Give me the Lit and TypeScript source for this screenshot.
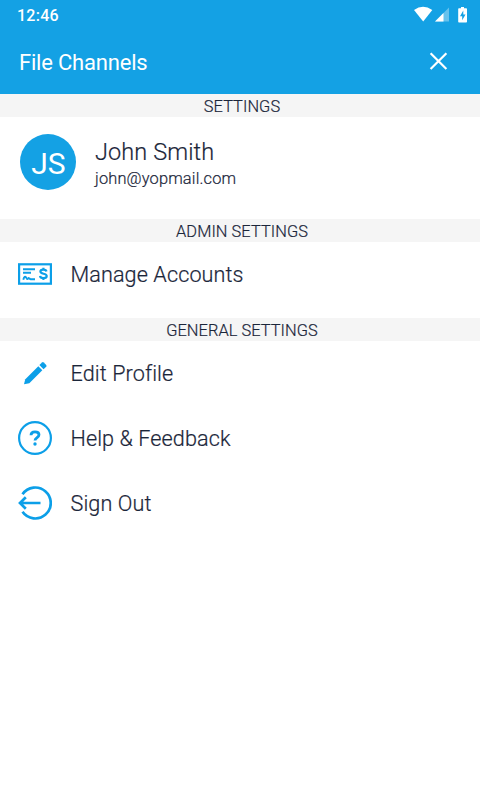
import { LitElement, html, css, svg } from "lit";
import { customElement } from "lit/decorators.js";

const icons = {
  accounts: svg`
    <rect x="1.1" y="7.3" width="31.8" height="19.4" fill="none" stroke="currentColor" stroke-width="2.2"/>
    <path d="M5 12.2H17M5 15.8H13M5.3 22.8C6 19.5 7.4 19 8.2 20.6S9.5 22.5 10.2 21.4S11.6 22.2 12.6 22.2H17" fill="none" stroke="currentColor" stroke-width="1.9"/>
    <path d="M28.4 14.5C28.2 12.9 26.9 12.6 25.3 12.6C23.6 12.6 22.4 13.3 22.4 14.6C22.4 17.7 28.7 15.8 28.7 19C28.7 20.4 27.3 21.1 25.5 21.1C23.6 21.1 22.2 20.5 22.1 18.9M25.4 10.8V12.8M25.4 21V23" fill="none" stroke="currentColor" stroke-width="2.2"/>`,
  edit: svg`
    <path d="M6 28.2L7.3 23.2L20.3 10.2L24.3 14.2L11.3 27.2Z" fill="currentColor"/>
    <path d="M21.4 9.1L24 6.5Q24.9 5.7 25.8 6.5L28.2 8.9Q29 9.8 28.2 10.7L25.5 13.2Z" fill="currentColor"/>`,
  help: svg`
    <circle cx="17" cy="17" r="15.9" fill="none" stroke="currentColor" stroke-width="2.2"/>
    <path d="M13 14.3C13 11.9 14.5 10.8 17 10.8C19.5 10.8 21 11.9 21 13.8C21 16.6 17 16.6 17 19.6" fill="none" stroke="currentColor" stroke-width="2.8"/>
    <circle cx="17" cy="23" r="1.7" fill="currentColor"/>`,
  signout: svg`
    <path d="M4.5 8.2A15.5 15.5 0 1 1 4.5 25.8" fill="none" stroke="currentColor" stroke-width="2.7"/>
    <path d="M22.5 17H2.5M7.8 11.2L2 17L7.8 22.8" fill="none" stroke="currentColor" stroke-width="2.7"/>`,
};

@customElement("app-root")
export class AppRoot extends LitElement {
  static styles = css`
    :host {
      display: block;
      width: 480px;
      height: 800px;
      overflow: hidden;
      background: #fff;
      color: #1b263a;
      font-family: Roboto, sans-serif;
    }
    svg { display: block; flex: none; }
    .top { height: 94px; background: #14a1e4; color: #fff; }
    .status {
      height: 30px;
      box-sizing: border-box;
      padding: 0 12px 0 17px;
      display: flex;
      align-items: center;
      justify-content: space-between;
      font-size: 16px;
      font-weight: 500;
      letter-spacing: 0.25px;
    }
    .bar {
      height: 64px;
      box-sizing: border-box;
      padding: 0 32px 0 19px;
      display: flex;
      align-items: center;
      justify-content: space-between;
      font-size: 22px;
      letter-spacing: -0.2px;
    }
    .bar svg { margin-top: -2px; }
    .section, .name, .mail, .row span {
      font-weight: 300;
      -webkit-text-stroke: 0.2px currentColor;
    }
    .section {
      height: 23px;
      line-height: 25px;
      background: #f5f5f5;
      text-align: center;
      padding-left: 4px;
      font-size: 16.4px;
      letter-spacing: 0.06px;
    }
    .profile {
      height: 102px;
      box-sizing: border-box;
      padding: 17px 20px 0;
      display: flex;
      gap: 19px;
    }
    .avatar {
      width: 56px;
      height: 56px;
      box-sizing: border-box;
      padding-left: 1px;
      border-radius: 50%;
      background: #14a1e4;
      color: #fff;
      font-size: 30px;
      line-height: 60px;
      text-align: center;
    }
    .name { font-size: 23.5px; line-height: 28px; padding-top: 4px; letter-spacing: 0.1px; }
    .mail { font-size: 16.4px; line-height: 24px; padding-top: 1px; letter-spacing: 0.16px; }
    .row {
      height: 64.7px;
      display: flex;
      align-items: center;
      gap: 18.5px;
      padding-left: 18px;
      font-size: 21.6px;
      letter-spacing: 0.1px;
    }
    .row svg { color: #0c9fe8; }
    .row span { padding-top: 0.8px; }
    .group { padding-bottom: 11.3px; }
  `;

  row(icon: unknown, label: string) {
    return html`<div class="row"><svg width="34" height="34" viewBox="0 0 34 34">${icon}</svg><span>${label}</span></div>`;
  }

  render() {
    return html`
      <header class="top">
        <div class="status">
          <span>12:46</span>
          <svg width="54" height="18" viewBox="0 -0.5 54 18" fill="#fff">
            <path d="M0 3.5Q9 -2.8 18.3 3.5L9.2 15Z"/>
            <path d="M35 1V15H21Z" opacity=".35"/>
            <path d="M29.5 6.5V15H21Z"/>
            <path fill-rule="evenodd" d="M45 1.7H47V.5H50V1.7H52.2Q53 1.7 53 2.5V15.2Q53 16 52.2 16H45Q44.2 16 44.2 15.2V2.5Q44.2 1.7 45 1.7ZM49.3 4L46 9.7H48.2V13.7L51.5 8H49.3Z"/>
          </svg>
        </div>
        <div class="bar">
          <span>File Channels</span>
          <svg width="19" height="19" viewBox="0 0 19 19"><path d="M1.6 1.2L17.4 17M17.4 1.2L1.6 17" fill="none" stroke="#fff" stroke-width="2.2"/></svg>
        </div>
      </header>
      <div class="section">SETTINGS</div>
      <div class="profile">
        <div class="avatar">JS</div>
        <div>
          <div class="name">John Smith</div>
          <div class="mail">john@yopmail.com</div>
        </div>
      </div>
      <div class="section">ADMIN SETTINGS</div>
      <div class="group">${this.row(icons.accounts, "Manage Accounts")}</div>
      <div class="section">GENERAL SETTINGS</div>
      ${this.row(icons.edit, "Edit Profile")}
      ${this.row(icons.help, "Help & Feedback")}
      ${this.row(icons.signout, "Sign Out")}
    `;
  }
}
